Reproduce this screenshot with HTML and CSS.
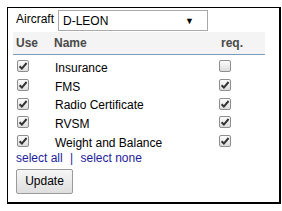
FILE: index.html
```html
<!DOCTYPE html>
<html lang="en">

<head>
    <meta charset="UTF-8">
    <title>Aircraft checks</title>
    <link rel="stylesheet" href="styles.css">
</head>

<body>

    <div class="panel">
        <div class="aircraft">
            <span class="label">Aircraft</span>
            <div class="select">
                <span>D-LEON</span>
                <span class="arrow">&#9660;</span>
            </div>
        </div>

        <table class="checks">
            <thead>
                <tr>
                    <th class="use">Use</th>
                    <th class="name">Name</th>
                    <th class="req">req.</th>
                </tr>
            </thead>
            <tbody>
                <tr>
                    <td class="use"><span class="box on"></span></td>
                    <td class="name">Insurance</td>
                    <td class="req"><span class="box"></span></td>
                </tr>
                <tr>
                    <td class="use"><span class="box on"></span></td>
                    <td class="name">FMS</td>
                    <td class="req"><span class="box on"></span></td>
                </tr>
                <tr>
                    <td class="use"><span class="box on"></span></td>
                    <td class="name">Radio Certificate</td>
                    <td class="req"><span class="box on"></span></td>
                </tr>
                <tr>
                    <td class="use"><span class="box on"></span></td>
                    <td class="name">RVSM</td>
                    <td class="req"><span class="box on"></span></td>
                </tr>
                <tr>
                    <td class="use"><span class="box on"></span></td>
                    <td class="name">Weight and Balance</td>
                    <td class="req"><span class="box on"></span></td>
                </tr>
            </tbody>
        </table>

        <div class="links">
            <a href="#">select all</a>
            <span class="sep">|</span>
            <a href="#">select none</a>
        </div>

        <button class="update">Update</button>
    </div>

</body>

</html>
```

FILE: styles.css
```css
body {
  margin: 0;
  padding: 0;
  font-family: "Liberation Sans", Arial, sans-serif;
  font-size: 12px;
  color: #000;
  background: #fff;
}

.panel {
  margin: 7px 0 0 7px;
  width: 266px;
  height: 194px;
  border: solid #000;
  border-width: 1px 2px 2px 1px;
  padding: 0 0 0 5px;
  box-sizing: content-box;
}

.aircraft {
  display: flex;
  align-items: flex-start;
  height: 24px;
  padding: 2px 0 0 3px;
  box-sizing: border-box;
}

.label {
  width: 42px;
  line-height: 14px;
  margin-top: 2px;
}

.select {
  display: flex;
  align-items: center;
  justify-content: space-between;
  width: 150px;
  height: 21px;
  box-sizing: border-box;
  border: 1px solid #a9a9a9;
  padding: 1px 13px 0 4px;
  font-size: 12px;
}

.arrow {
  font-size: 9px;
}

.checks {
  width: 252px;
  border-collapse: collapse;
}

.checks th {
  height: 22px;
  padding: 0;
  text-align: left;
  font-weight: bold;
  color: #4a4a4a;
  background: #f4f4f4;
  border-bottom: 1px solid #7d9cbd;
}

.checks td {
  height: 18.75px;
  padding: 0;
  vertical-align: top;
}

.checks .use {
  width: 38px;
  padding-left: 3px;
}

.checks td.name {
  padding-left: 1px;
  vertical-align: bottom;
  line-height: 12px;
}

.checks .req {
  width: 44px;
}

.checks th.req {
  padding-left: 2px;
}

.box {
  display: block;
  width: 10px;
  height: 10px;
  margin-top: 5px;
  border: 1px solid #8e8e8e;
  border-radius: 2px;
  background: linear-gradient(#fcfcfc, #dcdcdc);
}

.use .box {
  margin-left: 1px;
}

.box.on {
  background: url("data:image/svg+xml,%3Csvg xmlns='http://www.w3.org/2000/svg' width='10' height='10'%3E%3Cpath d='M1.6 5.2l2.3 2.4L8.6 2' fill='none' stroke='%23333' stroke-width='2'/%3E%3C/svg%3E"), linear-gradient(#fcfcfc, #dcdcdc);
}

.links {
  height: 15px;
  line-height: 15px;
  padding: 2px 0 0 3px;
  color: #1b1b9a;
}

.links a {
  color: #1b1b9a;
  text-decoration: none;
}

.sep {
  margin: 0 4px;
}

.update {
  display: block;
  margin: 3px 0 0 3px;
  width: 57px;
  height: 25px;
  padding: 0;
  font-family: "Liberation Sans", Arial, sans-serif;
  font-size: 12px;
  color: #000;
  border: 1px solid #9a9a9a;
  border-radius: 2px;
  background: linear-gradient(#f6f6f6, #dedede);
}
```
